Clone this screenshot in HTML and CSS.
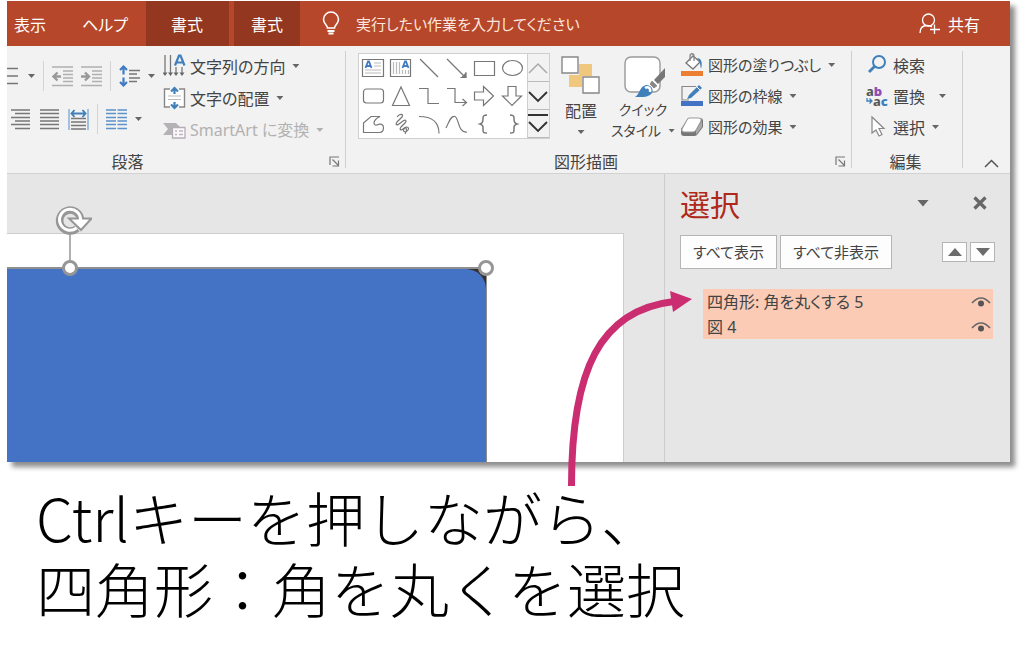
FILE: index.html
```html
<!DOCTYPE html>
<html lang="ja">
<head>
<meta charset="utf-8">
<title>選択ウィンドウ</title>
<link rel="stylesheet" href="styles.css">
</head>
<body>
<main class="page">
<section class="app">
  <nav class="tabs">
    <button class="tab tab-first">表示</button>
    <button class="tab tab-help">ヘルプ</button>
    <button class="tab tab-context tab-wide">書式</button>
    <button class="tab tab-context">書式</button>
    <label class="tell" for="tell-input">
      <svg width="18" height="26" viewBox="0 0 18 26" fill="none" stroke="#fff" stroke-width="1.6"><path d="M5.5 17C5.5 14 1.5 12.500 1.500 8.500a7.500 7.500 0 0 1 15 0C16.500 12.500 12.500 14 12.500 17z"/><path d="M5.500 20h7M6.500 22.500h5" stroke-width="2"/></svg>
    </label>
    <input id="tell-input" class="tell-input" type="text" placeholder="実行したい作業を入力してください" aria-label="実行したい作業">
    <button class="share">
      <svg width="22" height="22" viewBox="0 0 22 22" fill="none" stroke="#fff" stroke-width="1.300"><circle cx="9.500" cy="7" r="6"/><path d="M1 20c0-5 3-7.500 7-7.500 2 0 3.500.4 5 1.500M15.500 11.500v9.500M11 16.500h10"/></svg>
      <span>共有</span>
    </button>
  </nav>

  <div class="ribbon">
    <section class="group group-paragraph">
      <div class="group-body">
        <div class="para-icons">
          <div class="icon-row">
            <button class="ib" aria-label="箇条書き"><svg width="13" height="20" viewBox="0 0 13 20" stroke="#777" stroke-width="1.300"><path d="M0 2.500h11M0 10h11M0 17.500h11"/></svg></button>
            <i class="caret"></i>
            <i class="sep"></i>
            <button class="ib" aria-label="インデント解除"><svg width="21" height="21" viewBox="0 0 21 21" fill="none" stroke="#b0b0b0" stroke-width="1.300"><path d="M0 1h21M11 5h10M11 8.500h10M11 12h10M11 15.500h10M0 19.500h21"/><path d="M9 10.500H2M5.500 6.500l-4 4 4 4" stroke="#999" stroke-width="2.400"/></svg></button>
            <button class="ib" aria-label="インデント"><svg width="21" height="21" viewBox="0 0 21 21" fill="none" stroke="#b0b0b0" stroke-width="1.300"><path d="M0 1h21M11 5h10M11 8.500h10M11 12h10M11 15.500h10M0 19.500h21"/><path d="M0 10.500h7M4 6.500l4 4-4 4" stroke="#999" stroke-width="2.400"/></svg></button>
            <i class="sep"></i>
            <button class="ib" aria-label="行間"><svg width="21" height="22" viewBox="0 0 21 22" fill="none" stroke="#777" stroke-width="1.300"><path d="M10 5.500h11M10 9h8M10 13h11M10 16.500h8"/><path d="M4.500 1.500v8M1 5l3.500-3.500L8 5M4.500 12.500v8M1 17l3.500 3.500L8 17" stroke="#3f7cc4" stroke-width="2.200"/></svg></button>
            <i class="caret"></i>
          </div>
          <div class="icon-row icon-row-second">
            <button class="ib" aria-label="右揃え"><svg width="21" height="21" viewBox="0 0 21 21" stroke="#777" stroke-width="1.300"><path d="M1 1h19M5 4.500h15M1 8.500h19M5 12h15M1 15.500h19M5 19.500h15"/></svg></button>
            <button class="ib" aria-label="両端揃え"><svg width="21" height="21" viewBox="0 0 21 21" stroke="#777" stroke-width="1.300"><path d="M1 1h19M1 4.500h19M1 8.500h19M1 12h19M1 15.500h19M1 19.500h19"/></svg></button>
            <button class="ib" aria-label="均等割り付け"><svg width="21" height="21" viewBox="0 0 21 21" fill="none" stroke="#777" stroke-width="1.300"><path d="M3 9.500h15M3 13h15M3 16.500h15M3 20h15"/><path d="M1 0v21M20 0v21" stroke="#78a6d3"/><path d="M4 4.500h13M6.500 1L3.500 4.500l3 3.500M14.500 1l3 3.500-3 3.500" stroke="#3f7fba" stroke-width="1.900"/></svg></button>
            <i class="sep"></i>
            <button class="ib" aria-label="段組み"><svg width="21" height="21" viewBox="0 0 21 21" stroke="#5b93ca" stroke-width="1.300"><path d="M0 1h10M11.500 1H21M0 4.500h10M11.500 4.500H21M0 8.500h10M11.500 8.500H21M0 12h10M11.500 12H21M0 15.500h10M11.500 15.500H21M0 19.500h10M11.500 19.500H21"/></svg></button>
            <i class="caret"></i>
          </div>
        </div>
        <div class="commands">
          <button class="cmd"><svg width="23" height="24" viewBox="0 0 23 24" fill="none" stroke="#777" stroke-width="1.300"><path d="M2 1v18M7.500 1v18M13 13v6M19 13v6"/><path d="M-.5 18.500h5L2 22zM5 18.500h5L7.500 22zM10.500 18.500h5L13 22zM16.500 18.500h5L19 22z" fill="#666" stroke="none"/><path d="M12 11.500L16 1.500h1.500l4 10M13.500 8.500h6.500" stroke="#3f7fba" stroke-width="2.200"/></svg><span>文字列の方向</span><i class="caret"></i></button>
          <button class="cmd"><svg width="23" height="24" viewBox="0 0 23 24" fill="none"><path d="M1 3h21v18H1z" fill="#fff"/><path d="M7 3H1.500v18H7M16 3h5.500v18H16" stroke="#888" stroke-width="1.400"/><path d="M5 10h13M5 13.500h13" stroke="#bbb"/><path d="M11.500 2v6M8 5.500L11.500 2 15 5.500M11.500 16v6M8 18.500l3.500 3.500 3.500-3.500" stroke="#3f7fba" stroke-width="2.200"/></svg><span>文字の配置</span><i class="caret"></i></button>
          <button class="cmd cmd-off" disabled><svg width="23" height="24" viewBox="0 0 23 24" fill="none"><path d="M0 5h13l4 4H9v8H0l5-6z" fill="#b5b2b5"/><path d="M9.500 9.500h12.500v10.500H9.500z" fill="#fbf8fb" stroke="#b5aeb5" stroke-width="1.300"/><path d="M12 13h2M16 13h4M12 16.500h2M16 16.500h4" stroke="#bdb6bd" stroke-width="1.300"/></svg><span>SmartArt に変換</span><i class="caret"></i></button>
        </div>
      </div>
      <footer class="group-name"><span>段落</span><button class="launcher" aria-label="段落の設定"><svg width="11" height="11" viewBox="0 0 11 11" fill="none" stroke="#777" stroke-width="1.200"><path d="M1 9V1h9M3.500 3.500L9 9M9.500 4.500v5.500h-6"/></svg></button></footer>
    </section>

    <section class="group group-drawing">
      <div class="group-body">
        <div class="gallery">
          <div class="shapes">
            <svg viewBox="0 0 28 28"><path d="M3.500 5.500h21v17h-21z"/><path d="M15 9h7M15 12h7M6 16h16M6 19h16" stroke="#bbb"/><path d="M6.500 14L9 7.500h1l2.500 6.500M7.500 12h4" stroke="#3f7cc4" stroke-width="1.800"/></svg>
            <svg viewBox="0 0 28 28"><path d="M3.500 5.500h20v17h-20z"/><path d="M6.500 8v12M9.500 8v12M12.500 8v12M15.500 16v4M18.500 16v4M21.500 16v4" stroke="#bbb"/><path d="M15.500 14L18 7.500h1l2.500 6.500M16.500 12h4" stroke="#3f7cc4" stroke-width="1.800"/></svg>
            <svg viewBox="0 0 28 28"><path d="M5 5l18 18"/></svg>
            <svg viewBox="0 0 28 28"><path d="M4 5l18 18M22.500 18.500v5h-5" /><path d="M19 23.500h4v-4z" fill="#777"/></svg>
            <svg viewBox="0 0 28 28"><path d="M3.500 7.500h20v14h-20z"/></svg>
            <svg viewBox="0 0 28 28"><ellipse cx="13.500" cy="14" rx="10" ry="7.500"/></svg>
            <svg viewBox="0 0 28 28"><rect x="4.500" y="7" width="20" height="14" rx="3"/></svg>
            <svg viewBox="0 0 28 28"><path d="M14 5l8.500 18.500h-17z"/></svg>
            <svg viewBox="0 0 28 28"><path d="M4 6.500h9v15h11"/></svg>
            <svg viewBox="0 0 28 28"><path d="M4 6.500h8v14h11M19.500 17l4 3.500-4 3.500"/></svg>
            <svg viewBox="0 0 28 28"><path d="M3.500 10h9V4.500l10 9.500-10 9.500V18h-9z"/></svg>
            <svg viewBox="0 0 28 28"><path d="M9 4.500h8V14h5.500L13 23.500 3.500 14H9z"/></svg>
            <svg viewBox="0 0 28 28"><path d="M4.500 22.500V13L12 6.500h9c-8 4-7 9.500-3 8.500 4-2 6.500-.5 6.500 2.500 0 3-1.500 5-4 5z"/></svg>
            <svg viewBox="0 0 28 28"><path d="M10 7c3-4 7-3 5 0l-5 5c-2 3 0 3.500 2 2l4-3c3-2 4 0 2 2l-4 4c-2 3 0 3.500 2 2 3-3 7-2 5 1s-6 2-4-1 4 1 1 5"/></svg>
            <svg viewBox="0 0 28 28"><path d="M4 6.500c13 0 20 6 20 17"/></svg>
            <svg viewBox="0 0 28 28"><path d="M3 18C6 12 8 5 12 6.500S15 23.500 24 22"/></svg>
            <svg viewBox="0 0 28 28"><path d="M16 5c-3 0-4 .5-4 3s.5 5-3 6c3.500 1 3 3 3 6s1 3 4 3" stroke-width="1.500"/></svg>
            <svg viewBox="0 0 28 28"><path d="M11 5c3 0 4 .5 4 3s-.5 5 3 6c-3.500 1-3 3-3 6s-1 3-4 3" stroke-width="1.500"/></svg>
          </div>
          <div class="gallery-nav">
            <button aria-label="前の行"><svg width="22" height="26" viewBox="0 0 22 26" fill="none" stroke="#aaa" stroke-width="1.500"><path d="M1 18l9-9 9 9"/></svg></button>
            <button aria-label="次の行"><svg width="22" height="26" viewBox="0 0 22 26" fill="none" stroke="#333" stroke-width="1.900"><path d="M1 9l9 9 9-9"/></svg></button>
            <button aria-label="その他"><svg width="22" height="26" viewBox="0 0 22 26" fill="none" stroke="#333" stroke-width="1.900"><path d="M0 4h20M1 11l9 9 9-9"/></svg></button>
          </div>
        </div>
        <button class="big big-arrange">
          <svg width="40" height="40" viewBox="0 0 40 40"><path d="M18 8h13v12H18zM8 19h13v12H8z" fill="#efc77d"/><path d="M1 1h16v16H1zM22 21h16v16H22z" fill="#fff" stroke="#888" stroke-width="1.400"/></svg>
          <span>配置</span><i class="caret"></i>
        </button>
        <button class="big big-quick">
          <svg width="44" height="44" viewBox="0 0 44 44"><rect x="4" y="2" width="35" height="35" rx="6" fill="#fff" stroke="#999" stroke-width="1.400"/><path d="M44 13v9l-7 7-4-4z" fill="#777"/><path d="M31 25l6 6-4 3-5-5z" fill="#8a8a8a" stroke="#fff"/><path d="M14 42c5-3 4-10 11-12 5 0 8 4 6 8-4 5-11 4-17 4z" fill="#3f7fba"/><path d="M24 33c3-2 6 0 5 4" fill="none" stroke="#fff" stroke-width="2.500"/></svg>
          <span>クイック</span><span class="big-line">スタイル <i class="caret"></i></span>
        </button>
        <div class="commands commands-format">
          <button class="cmd"><svg width="23" height="24" viewBox="0 0 23 24" fill="none"><path d="M0 18h22v5H0z" fill="#ed7d31"/><path d="M5 10l7-7 7 6-7 7z" fill="#fff" stroke="#777" stroke-width="1.300"/><path d="M9 8V3c0-3 4-3 4 0v5" stroke="#888" stroke-width="1.300"/><path d="M16 5c4 0 6 4 4 11-1-5-1-8-4-11z" fill="#3f7fba"/></svg><span>図形の塗りつぶし</span><i class="caret"></i></button>
          <button class="cmd"><svg width="23" height="24" viewBox="0 0 23 24" fill="none"><path d="M15 2.500H1V16h7" stroke="#888" stroke-width="1.200"/><path d="M6 15l2-4L18 1l3 3L10 14z" fill="#3f7fba"/><path d="M16 3l3 3" stroke="#fff"/><path d="M0 17h22v5H0z" fill="#4472c4"/></svg><span>図形の枠線</span><i class="caret"></i></button>
          <button class="cmd"><svg width="23" height="24" viewBox="0 0 23 24"><path d="M7 3h12q3 0 3 3v6l-6 8q-1 1-3 1H3q-3 0-3-3v-4z" fill="#777"/><path d="M15 15l6-9v6l-6 8z" fill="#aaa"/><path d="M8 3h10q3 0 2 3l-5 9q-1 2-3 2H3q-3 0-2-3l5-9q1-2 2-2z" fill="#fff" stroke="#999"/></svg><span>図形の効果</span><i class="caret"></i></button>
        </div>
      </div>
      <footer class="group-name"><span>図形描画</span><button class="launcher" aria-label="図形の書式設定"><svg width="11" height="11" viewBox="0 0 11 11" fill="none" stroke="#777" stroke-width="1.200"><path d="M1 9V1h9M3.500 3.500L9 9M9.500 4.500v5.500h-6"/></svg></button></footer>
    </section>

    <section class="group group-edit">
      <div class="group-body">
        <div class="commands commands-format">
          <button class="cmd"><svg width="23" height="24" viewBox="0 0 23 24" fill="none" stroke="#3f7fba"><circle cx="13" cy="9" r="6" stroke-width="2"/><path d="M9 13l-6 6" stroke-width="2.800"/></svg><span>検索</span></button>
          <button class="cmd">
            <span class="abac">
              <span class="abac-top">a<b class="abac-b">b</b></span>
              <span class="abac-bottom"><svg width="7" height="7" viewBox="0 0 7 7" fill="none" stroke="#3f7fba" stroke-width="1.300"><path d="M1 0v3h5M3.500 .5L6 3 3.500 5.500"/></svg>a<b class="abac-c">c</b></span>
            </span>
            <span>置換</span><i class="caret caret-far"></i></button>
          <button class="cmd"><svg width="23" height="24" viewBox="0 0 23 24"><path d="M6 2v16l4-3 3 6 3-1.500-3-6h5z" fill="#fff" stroke="#888" stroke-width="1.200"/></svg><span>選択</span><i class="caret"></i></button>
        </div>
      </div>
      <footer class="group-name"><span>編集</span></footer>
    </section>
    <button class="collapse" aria-label="リボンを折りたたむ"><svg width="15" height="9" viewBox="0 0 15 9" fill="none" stroke="#555" stroke-width="1.500"><path d="M1 8l6.500-6.500L14 8"/></svg></button>
  </div>

  <div class="work">
    <div class="canvas">
      <div class="slide">
        <div class="picture">
          <div class="shape"></div>
          <svg class="rotate" width="38" height="60" viewBox="0 0 38 60" fill="none"><path d="M16 30v30" stroke="#969696" stroke-width="1.500"/><path d="M23 24.500A10.500 10.500 0 1 1 26.500 15" stroke="#969696" stroke-width="7.500"/><path d="M15 14.500h22.500L27 26z" fill="#fff" stroke="#969696" stroke-width="2"/><path d="M22.500 24A10.500 10.500 0 1 1 26.500 16.500" stroke="#fff" stroke-width="3"/><path d="M25 15l4 1-2 6-4-4z" fill="#fff"/></svg>
          <i class="handle handle-mid"></i>
          <i class="handle handle-corner"></i>
        </div>
      </div>
    </div>
    <aside class="pane">
      <header class="pane-head">
        <h1>選択</h1>
        <button class="ib pane-menu" aria-label="オプション"><i class="caret caret-large"></i></button>
        <button class="ib" aria-label="閉じる"><svg width="14" height="14" viewBox="0 0 14 14" stroke="#666" stroke-width="3.200"><path d="M1.500 1.500l11 11M12.500 1.500l-11 11"/></svg></button>
      </header>
      <div class="pane-actions">
        <button class="btn">すべて表示</button>
        <button class="btn">すべて非表示</button>
        <button class="order order-first" aria-label="前面へ"><svg width="14" height="8" viewBox="0 0 14 8"><path d="M0 8l7-8 7 8z" fill="#6b6b6b"/></svg></button>
        <button class="order" aria-label="背面へ"><svg width="14" height="8" viewBox="0 0 14 8"><path d="M0 0l7 8 7-8z" fill="#6b6b6b"/></svg></button>
      </div>
      <ul class="objects">
        <li><span>四角形: 角を丸くする 5</span><button class="ib" aria-label="表示の切り替え"><svg width="20" height="12" viewBox="0 0 20 12"><path d="M1 7q9-10 18 0" fill="none" stroke="#666" stroke-width="1.600"/><circle cx="10" cy="7.500" r="3" fill="#555"/></svg></button></li>
        <li><span>図 4</span><button class="ib" aria-label="表示の切り替え"><svg width="20" height="12" viewBox="0 0 20 12"><path d="M1 7q9-10 18 0" fill="none" stroke="#666" stroke-width="1.600"/><circle cx="10" cy="7.500" r="3" fill="#555"/></svg></button></li>
      </ul>
    </aside>
  </div>
  <svg class="pointer" width="126" height="196" viewBox="0 0 126 196"><path d="M4.500 196C4.500 80 33 20 107 11.500" fill="none" stroke="#cb2d71" stroke-width="7"/><path d="M103 1l22 8-19 13z" fill="#cb2d71"/></svg>
</section>
<p class="caption">Ctrlキーを押しながら、<br>四角形：角を丸くを選択</p>
</main>
</body>
</html>
```
FILE: styles.css
```css
* { box-sizing: border-box; }
body {
  margin: 0;
  background: #fff;
  color: #444;
  font: 16px/20px "Noto Sans CJK JP", "Noto Sans", sans-serif;
  font-feature-settings: "palt";
}
button {
  display: flex;
  align-items: center;
  padding: 0;
  border: 0;
  background: none;
  color: inherit;
  font: inherit;
  font-feature-settings: inherit;
  white-space: nowrap;
}
svg { flex: none; display: block; }
.page { padding: 1px 14px 0 7px; }
.app { position: relative; box-shadow: 5px 5px 5px rgba(0, 0, 0, 0.45); }

.tabs {
  display: flex;
  align-items: center;
  height: 45px;
  padding-right: 30px;
  background: #b7472a;
  color: #fff;
}
.tab { height: 45px; padding: 0 17px; }
.tab-first { padding: 0 36px 0 7px; }
.tab-help { padding: 0 18px 0 0; }
.tab-context { background: #933720; }
.tab-wide { margin-right: 5px; padding: 0 26px 0 25px; }
.tell { margin: 0 16px 0 22px; }
.tell-input {
  flex: 1;
  min-width: 0;
  height: 30px;
  padding: 0;
  border: 0;
  background: none;
  color: #fff;
  font: inherit;
  font-size: 15px;
  font-feature-settings: inherit;
}
.tell-input::placeholder { color: #fbe6df; opacity: 1; }
.share { gap: 7px; }

.ribbon {
  display: flex;
  height: 128px;
  border-bottom: 1px solid #d2d2d2;
  background: #f2f2f2;
}
.group { position: relative; display: flex; flex-direction: column; flex: none; }
.group::after {
  content: "";
  position: absolute;
  top: 5px;
  right: 0;
  bottom: 5px;
  width: 1px;
  background: #cfcfcf;
}
.group-paragraph { width: 339px; }
.group-drawing { width: 506px; }
.group-edit { width: 111px; }
.group-body { display: flex; align-items: flex-start; height: 104px; }
.group-name {
  display: flex;
  align-items: center;
  justify-content: center;
  position: relative;
  height: 22px;
  padding-right: 98px;
}
.group-drawing .group-name { padding-right: 26px; }
.group-edit .group-name { padding: 0 4px 0 0; }
.launcher { position: absolute; right: 6px; top: 6px; }

.para-icons { width: 156px; padding-top: 19px; }
.icon-row { display: flex; align-items: center; gap: 8px; height: 22px; }
.icon-row-second { margin-top: 21px; padding-left: 3px; }
.sep { width: 1px; height: 30px; background: #d4d4d4; }
.caret {
  flex: none;
  width: 7px;
  height: 4px;
  background: #666;
  clip-path: polygon(0 0, 100% 0, 50% 100%);
}
.caret-large { width: 12px; height: 7px; }
.commands { display: flex; flex-direction: column; gap: 8px; padding-top: 8px; }
.commands-format { gap: 7px; padding-top: 7px; }
.cmd { height: 24px; gap: 4px; }
.cmd .caret { margin-left: 3px; }
.cmd .caret-far { margin-left: 10px; }
.cmd-off { color: #b1b1b1; font-family: "Noto Sans", "Noto Sans CJK JP", sans-serif; }
.cmd-off .caret { background: #b1b1b1; }
.group-drawing .cmd { font-size: 15px; }

.gallery {
  display: flex;
  height: 86px;
  margin: 7px 0 0 12px;
  border: 1px solid #cfcfcf;
  background: #fff;
}
.shapes { display: grid; grid-template-columns: repeat(6, 28px); grid-template-rows: repeat(3, 28px); }
.shapes svg { width: 28px; height: 28px; fill: none; stroke: #777; stroke-width: 1.2; }
.gallery-nav { display: grid; grid-template-rows: repeat(3, 28px); width: 22px; background: #f2f2f2; }
.gallery-nav button { border-left: 1px solid #cfcfcf; border-bottom: 1px solid #bbb; overflow: hidden; }
.big { flex-direction: column; align-items: center; }
.big-arrange { width: 40px; margin: 10px 0 0 11px; }
.big-arrange span { margin-top: 4px; }
.big-arrange .caret { margin-top: 10px; }
.big-quick { width: 66px; margin: 9px 5px 0 9px; font-size: 14px; }
.big-quick span { line-height: 21px; }
.big-line { display: flex; align-items: center; gap: 7px; }
.group-edit .commands { padding-left: 14px; }
.abac {
  width: 23px;
  font: bold 13px/10px "Noto Sans", sans-serif;
  color: #555;
}
.abac-top { display: flex; }
.abac-bottom { display: flex; align-items: center; }
.abac-b { color: #8e4fb5; }
.abac-c { color: #3f7fba; }
.collapse { margin: 113px 11px 0 auto; height: 9px; }

.work { display: flex; min-height: 288px; background: #e6e6e6; }
.canvas { display: flex; flex: 1; padding: 59px 40px 0 0; }
.slide {
  flex: 1;
  display: flex;
  padding: 33px 136px 0 0;
  border-top: 1px solid #cdcdcd;
  border-right: 1px solid #cdcdcd;
  background: #fff;
}
.picture {
  position: relative;
  flex: 1;
  border-top: 2px solid #8f8f8f;
  border-right: 1px solid #8f8f8f;
  background: #35302d;
}
.shape { height: 100%; border-radius: 0 20px 0 0; background: #4472c4; }
.handle {
  position: absolute;
  width: 16px;
  height: 16px;
  border: 3px solid #969696;
  border-radius: 50%;
  background: #fff;
}
.handle-mid { left: 55px; top: -9px; }
.handle-corner { right: -8px; top: -9px; }
.rotate { position: absolute; left: 47px; top: -65px; }

.pane { width: 346px; border-left: 1px solid #cdcdcd; padding: 9px 15px 0; }
.pane-head { display: flex; align-items: center; height: 40px; padding-right: 8px; }
.pane-head h1 { margin: 0; color: #b0281a; font-size: 30px; line-height: 40px; font-weight: 400; }
.pane-menu { margin: 0 44px 0 auto; }
.pane-actions { display: flex; align-items: center; gap: 3px; margin-top: 12px; }
.btn { height: 34px; padding: 0 12px; border: 1px solid #b5b5b5; background: #fdfdfd; font-size: 15px; }
.order { justify-content: center; width: 25px; height: 20px; border: 1px solid #b5b5b5; background: #fdfdfd; }
.order-first { margin-left: auto; }
.objects {
  margin: 20px 2px 0 23px;
  padding: 0;
  list-style: none;
  background: #fbcbb5;
  font-family: "Noto Sans", "Noto Sans CJK JP", sans-serif;
}
.objects li { display: flex; align-items: center; justify-content: space-between; height: 25px; padding: 0 2px 0 4px; }

.pointer { position: absolute; right: 317px; top: 289px; }
.caption {
  margin: 19px 0 0 29px;
  color: #000;
  font-size: 59px;
  line-height: 71px;
  font-weight: 300;
  font-feature-settings: normal;
}
```
